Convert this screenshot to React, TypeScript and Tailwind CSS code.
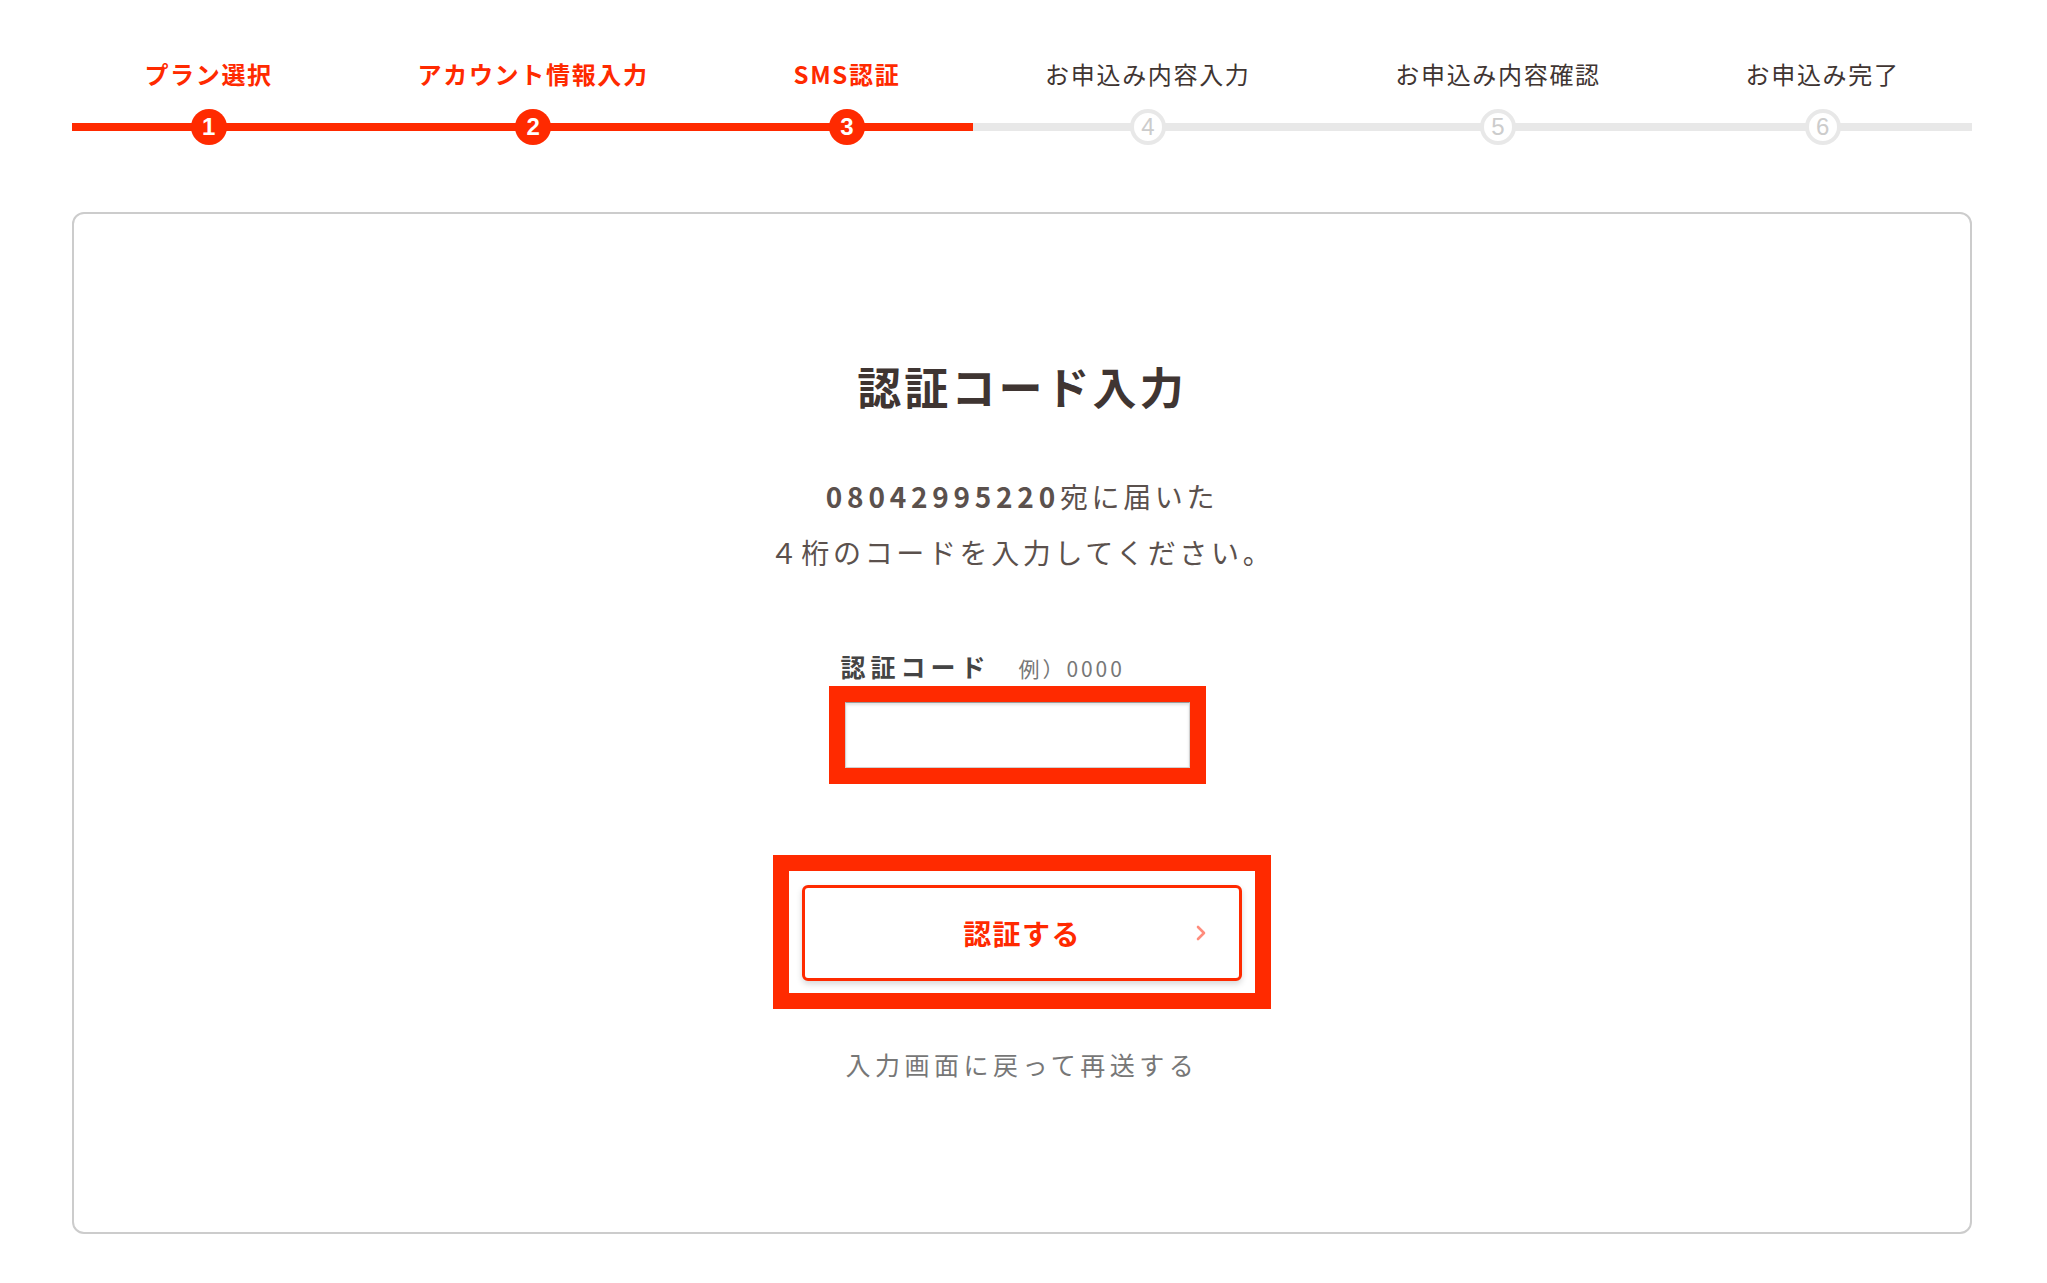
import React from 'react';

const JP = '"Noto Sans CJK JP", "Noto Sans", sans-serif';

const STEPS = [
  'プラン選択',
  'アカウント情報入力',
  'SMS認証',
  'お申込み内容入力',
  'お申込み内容確認',
  'お申込み完了',
];

const CURRENT = 2;

const Stepper: React.FC = () => (
  <ol className="flex w-[1900px] ml-[72px] pt-[58px]">
    {STEPS.map((label, i) => {
      const done = i <= CURRENT;
      return (
        <li key={label} className="flex-auto flex flex-col items-center">
          <span
            className={`text-[24px] leading-[32px] tracking-[0.07em] whitespace-nowrap ${
              done ? 'text-[#ff2a00] font-bold' : 'text-[#3f3532]'
            }`}
          >
            {label}
          </span>
          <div className={`relative mt-[33px] h-[8px] w-full ${done ? 'bg-[#ff2a00]' : 'bg-[#e8e8e8]'}`}>
            {/* step number marker on the line */}
            <span
              className={`absolute left-1/2 top-1/2 -translate-x-1/2 -translate-y-1/2 w-[36px] h-[36px] rounded-full flex items-center justify-center text-[24px] leading-none ${
                done
                  ? 'bg-[#ff2a00] text-white font-bold'
                  : 'bg-white border-[4px] border-[#e8e8e8] text-[#cccccc]'
              }`}
              style={{ fontFamily: '"Liberation Sans", Arial, sans-serif' }}
            >
              {i + 1}
            </span>
          </div>
        </li>
      );
    })}
  </ol>
);

export default function App() {
  return (
    <div className="min-h-screen bg-white" style={{ fontFamily: JP }}>
      <Stepper />

      <section className="w-[1900px] ml-[72px] mt-[81px] border-2 border-[#cccccc] rounded-[12px] pt-[139px] pb-[150px] flex flex-col items-center">
        <h1 className="text-[44px] leading-[66px] font-bold tracking-[0.07em] text-[#3f3532]">
          認証コード入力
        </h1>

        <p className="mt-[49px] text-center text-[28px] leading-[56px] tracking-[0.13em] text-[#5b514d]">
          <span className="font-bold tracking-[0.17em]">08042995220</span>宛に届いた
          <br />４桁のコードを入力してください。
        </p>

        <div className="mt-[68px] mr-[10px] flex flex-col items-start">
          <label className="pl-[12px] flex items-baseline text-[#444444]">
            <span className="text-[25px] leading-[36px] font-bold tracking-[0.2em]">認証コード</span>
            <span className="ml-[28px] text-[21px] tracking-[0.14em] text-[#777777]">例）0000</span>
          </label>
          <div className="mt-px border-[16px] border-[#ff2a00]">
            <input
              type="text"
              inputMode="numeric"
              className="block w-[345px] h-[66px] border border-[#d0d0d0] border-t-[#9a9a9a] bg-white shadow-[inset_0_2px_3px_rgba(0,0,0,0.12)] outline-none px-3 text-[24px]"
            />
          </div>
        </div>

        <div className="mt-[71px] border-[16px] border-[#ff2a00] px-[13px] pt-[14px] pb-[12px]">
          <button className="relative w-[440px] h-[96px] rounded-[6px] border-[3px] border-[#ff2a00] bg-white shadow-[0_3px_6px_rgba(0,0,0,0.16)] flex items-center justify-center">
            <span className="text-[28px] font-bold tracking-[0.05em] text-[#ff2a00]">認証する</span>
            <svg
              className="absolute right-[32px] top-1/2 -translate-y-1/2"
              width="12"
              height="18"
              viewBox="0 0 12 18"
              fill="none"
            >
              <path d="M3 3l6 6-6 6" stroke="#ff8c7c" strokeWidth="2.6" strokeLinecap="round" strokeLinejoin="round" />
            </svg>
          </button>
        </div>

        <a className="mt-[37px] text-[25px] leading-[36px] tracking-[0.18em] text-[#777777] cursor-pointer">
          入力画面に戻って再送する
        </a>
      </section>
    </div>
  );
}
